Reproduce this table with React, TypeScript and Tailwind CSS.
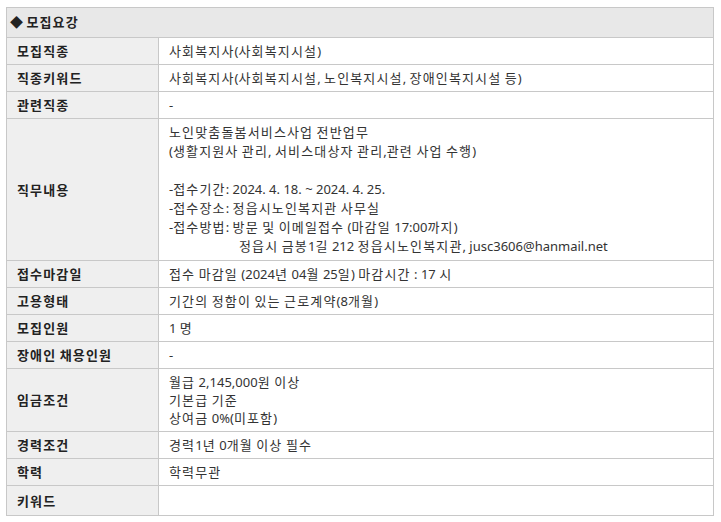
import React from "react";

const font = { fontFamily: '"Noto Sans", "Noto Sans CJK KR", sans-serif' };

function T({ s }: { s: string }) {
  const parts = s.split(/([\uAC00-\uD7A3\u3131-\u318E]+)/);
  return (
    <span>
      {parts.map((p, i) =>
        /[\uAC00-\uD7A3\u3131-\u318E]/.test(p) ? (
          <span key={i} className="tracking-[1.15px]">
            {p}
          </span>
        ) : (
          <React.Fragment key={i}>{p}</React.Fragment>
        )
      )}
    </span>
  );
}

function Row({ label, lines = [], valueClass = "", last = false, rowClass = "" }: { label: string; lines?: string[]; valueClass?: string; last?: boolean; rowClass?: string }) {
  return (
    <div className={`flex ${last ? "" : "border-b border-[#c8c8c8]"} ${rowClass}`}>
      <div className="w-[152px] shrink-0 bg-[#efefef] border-r border-[#c8c8c8] pl-[10px] flex items-center font-bold text-[13px] leading-[18px] text-[#222]">
        <T s={label} />
      </div>
      <div className={`flex-1 pl-[10px] py-[4px] text-[13px] leading-[18px] text-[#333] ${valueClass}`}>
        {lines.map((l, i) => (
          <div key={i} className={l.startsWith("정읍시 금봉") ? "pl-[70px]" : ""}>
            {l === "" ? "\u00a0" : <T s={l} />}
          </div>
        ))}
      </div>
    </div>
  );
}

export default function App() {
  return (
    <div className="bg-white w-[721px] h-[522px] pt-[7px] pl-[6px]" style={font}>
      <div className="w-[708px] border border-[#c8c8c8]">
        <div className="h-[30px] bg-[#e8e8e8] border-b border-[#c8c8c8] flex items-center pl-[3px] font-bold text-[13px] text-[#222]">
          <T s="◆ 모집요강" />
        </div>
        <Row label="모집직종" lines={["사회복지사(사회복지시설)"]} />
        <Row label="직종키워드" lines={["사회복지사(사회복지시설, 노인복지시설, 장애인복지시설 등)"]} />
        <Row label="관련직종" lines={["-"]} />
        <Row
          label="직무내용"
          valueClass="!leading-[19px]"
          lines={[
            "노인맞춤돌봄서비스사업 전반업무",
            "(생활지원사 관리, 서비스대상자 관리,관련 사업 수행)",
            "",
            "-접수기간: 2024. 4. 18. ~ 2024. 4. 25.",
            "-접수장소: 정읍시노인복지관 사무실",
            "-접수방법: 방문 및 이메일접수 (마감일 17:00까지)",
            "정읍시 금봉1길 212 정읍시노인복지관, jusc3606@hanmail.net",
          ]}
        />
        <Row label="접수마감일" lines={["접수 마감일 (2024년 04월 25일) 마감시간 : 17 시"]} />
        <Row label="고용형태" lines={["기간의 정함이 있는 근로계약(8개월)"]} />
        <Row label="모집인원" lines={["1 명"]} />
        <Row label="장애인 채용인원" lines={["-"]} />
        <Row label="임금조건" lines={["월급 2,145,000원 이상", "기본급 기준", "상여금 0%(미포함)"]} />
        <Row label="경력조건" lines={["경력1년 0개월 이상 필수"]} />
        <Row label="학력" lines={["학력무관"]} />
        <Row label="키워드" last rowClass="h-[29px]" />
      </div>
    </div>
  );
}
